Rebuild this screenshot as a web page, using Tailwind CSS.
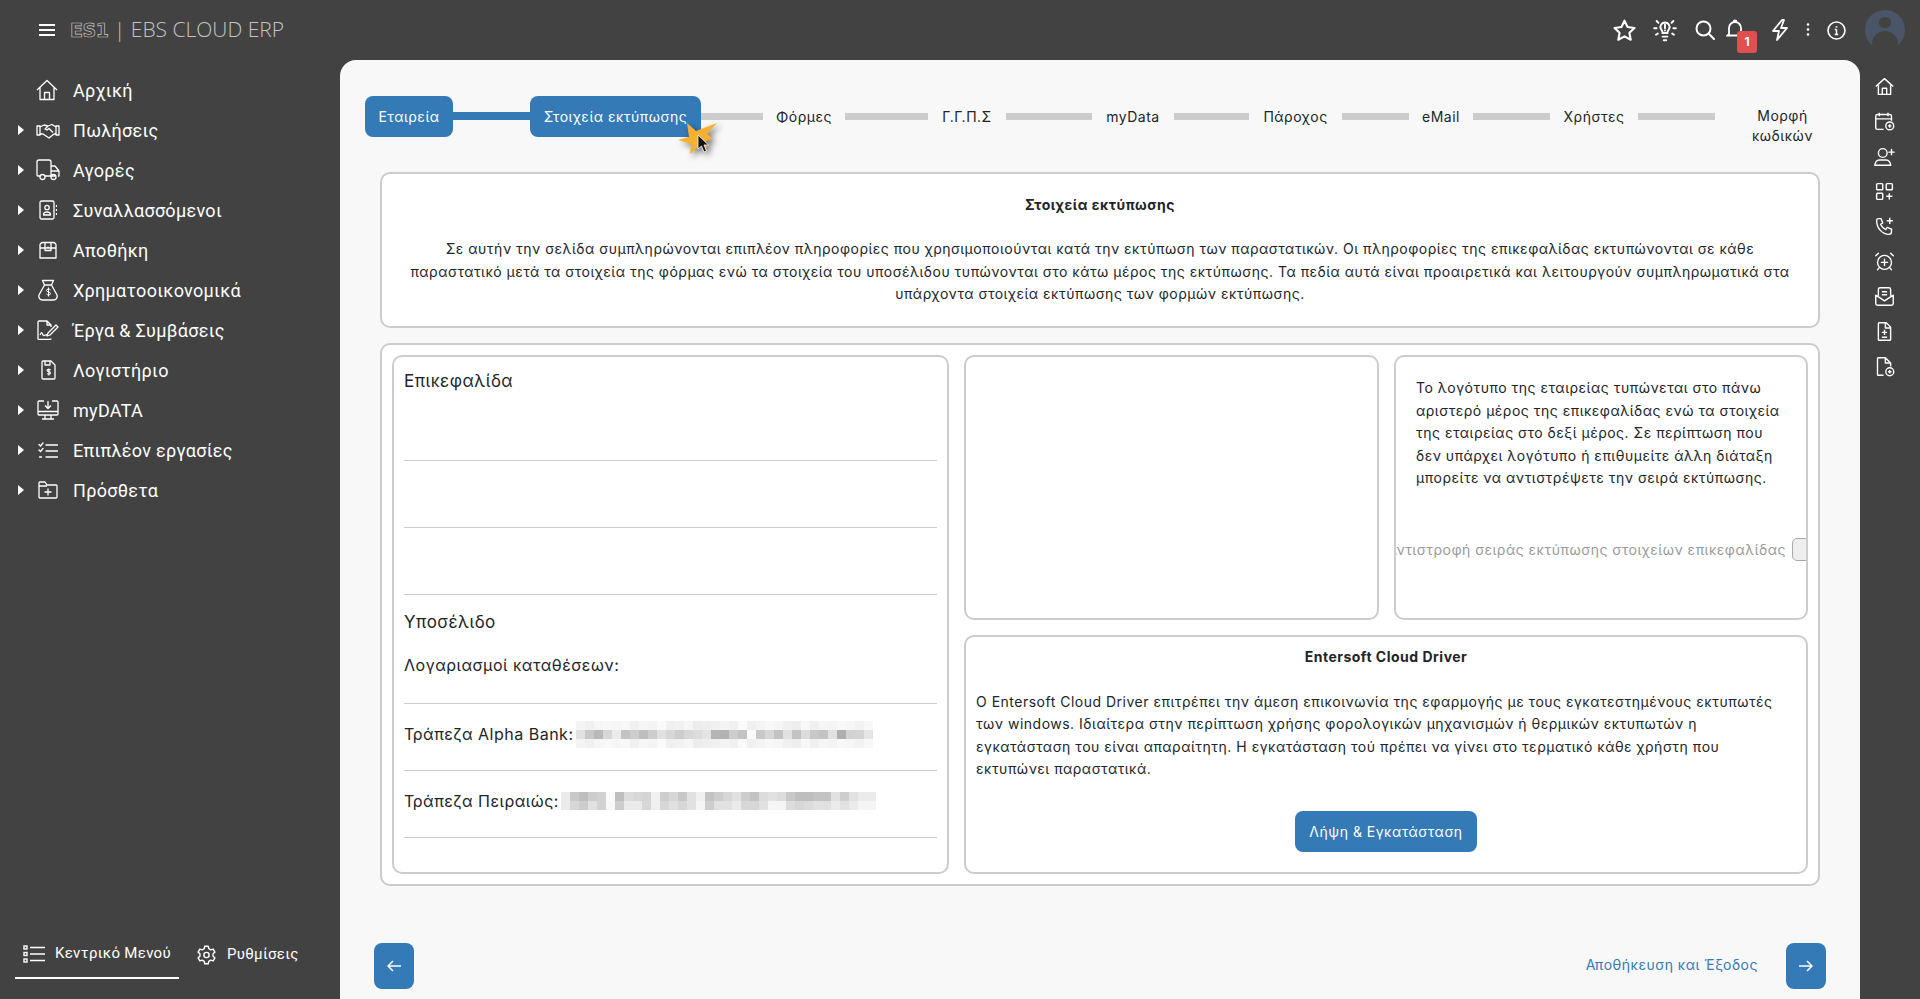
<!DOCTYPE html>
<html lang="el">
<head>
  <meta charset="UTF-8" />
  <title>EBS Cloud ERP</title>
  <script src="https://cdn.jsdelivr.net/npm/@tailwindcss/browser@4"></script>
</head>
<body class="h-screen overflow-hidden bg-[#424242] font-['Inter',sans-serif] text-[#212529] flex flex-col">
  <!-- Top bar -->
  <header class="h-[60px] shrink-0 flex items-center text-white">
    <svg class="ml-[39px] w-[17px] h-[14px]" viewBox="0 0 17 14" fill="none" stroke="#fff" stroke-width="2"><path d="M0 2h16M0 7h16M0 12h16"/></svg>
    <span class="ml-[14px] w-[42px] font-['DejaVu_Sans',sans-serif] font-bold text-[19px] leading-none tracking-[-0.5px] text-transparent [-webkit-text-stroke:0.7px_#c4c4c4]">ES1</span>
    <span class="ml-[2px] font-['Open_Sans',sans-serif] font-light text-[21px] text-[#c4c4c4] whitespace-nowrap">| EBS CLOUD ERP</span>
    <div class="ml-auto flex items-center h-full">
      <svg class="w-[25px] h-[25px]" viewBox="0 0 24 24" fill="none" stroke="#fff" stroke-width="2" stroke-linejoin="round"><path d="M12 2.500l2.900 6.200 6.700.9-4.900 4.600 1.300 6.700-6-3.300-6 3.300 1.300-6.700-4.900-4.600 6.700-.9z"/></svg>
      <svg class="ml-[16px] w-[24px] h-[24px]" viewBox="2 3 20 19" fill="none" stroke="#fff" stroke-width="1.600" stroke-linecap="round"><path d="M8.500 11.500a3.800 3.800 0 1 1 7 0c-.6 1-1.500 1.700-1.500 3.500h-4c0-1.800-.9-2.500-1.500-3.500zM10 18h4M11 21h2M12 8v3M12 12.800v.2M3 11h2M19 11h2M5 5l1.500 1.500M19 5l-1.500 1.500M4.500 16.500L6 15.500M19.500 16.500L18 15.500"/></svg>
      <svg class="ml-[17px] w-[22px] h-[22px]" viewBox="0 0 22 22" fill="none" stroke="#fff" stroke-width="2" stroke-linecap="round"><circle cx="9.500" cy="9.500" r="7"/><path d="M14.800 14.800L20 20"/></svg>
      <span class="relative ml-[10px] w-[18px] h-[22px]">
        <svg class="w-[18px] h-[22px]" viewBox="0 0 18 22" fill="none" stroke="#fff" stroke-width="1.800" stroke-linecap="round"><path d="M3 15V9a6 6 0 0 1 12 0v6l1.500 1.500h-15zM7.500 3a1.500 1.500 0 0 1 3 0"/></svg>
        <span class="absolute left-[11px] top-[12px] w-[20px] h-[22px] rounded-[3px] bg-[#df5050] text-white text-[12px] font-bold flex items-center justify-center">1</span>
      </span>
      <svg class="ml-[26px] w-[20px] h-[24px]" viewBox="0 0 20 24" fill="none" stroke="#fff" stroke-width="1.800" stroke-linejoin="round"><path d="M12 2L3 13h6l-2 9 10-12h-6l3-8z"/></svg>
      <svg class="ml-[16px] mb-[2px] w-[4px] h-[13px]" viewBox="0 0 4 13" fill="#fff"><circle cx="2" cy="1.500" r="1.300"/><circle cx="2" cy="6.500" r="1.300"/><circle cx="2" cy="11.500" r="1.300"/></svg>
      <svg class="ml-[17px] w-[19px] h-[19px]" viewBox="0 0 19 19" fill="none" stroke="#fff" stroke-width="1.600"><circle cx="9.500" cy="9.500" r="8.500"/><path d="M9.500 8.500v5M7.800 8.500h1.700M7.800 13.500h3.400"/><path d="M9.500 5.200v1.400" stroke-width="1.800"/></svg>
      <div class="ml-[19px] mr-[15px] w-[40px] h-[40px] rounded-full bg-[#4a5568] overflow-hidden flex flex-col items-center">
        <span class="mt-[7px] w-[12px] h-[12px] rounded-full bg-[#424242]"></span>
        <span class="mt-[3px] w-[26px] h-[20px] rounded-t-full bg-[#424242]"></span>
      </div>
    </div>
  </header>

  <div class="flex-1 flex min-h-0">
    <!-- Sidebar -->
    <aside class="w-[340px] shrink-0 flex flex-col text-white font-['Roboto',sans-serif]">
      <nav class="pt-[10px] text-[18px] tracking-[0.3px]">
        <a class="h-[40px] flex items-center"><span class="w-[36px]"></span>
          <svg class="w-[22px] h-[22px] mr-[15px]" viewBox="0 0 22 22" fill="none" stroke="#fff" stroke-width="1.300" stroke-linejoin="round"><path d="M1 11L11 1.500 21 11M4 8.500V20.500h14V8.500M8.500 20.500v-7h5v7"/></svg>Αρχική</a>
        <a class="h-[40px] flex items-center"><span class="w-[36px] pl-[18px]"><span class="block w-0 h-0 border-y-[5px] border-y-transparent border-l-[6px] border-l-white"></span></span>
          <svg class="w-[24px] h-[22px] mr-[13px]" viewBox="0 0 24 22" fill="none" stroke="#fff" stroke-width="1.300" stroke-linejoin="round"><path d="M1 7h3v9H1zM23 7h-3v9h3zM4 8l4-2 4 1 4-1.500 4 2.500v7h-2l-5 4-3-2-3-2H4zM12 7l-3 3 2 1 2-1.500 4 4"/></svg>Πωλήσεις</a>
        <a class="h-[40px] flex items-center"><span class="w-[36px] pl-[18px]"><span class="block w-0 h-0 border-y-[5px] border-y-transparent border-l-[6px] border-l-white"></span></span>
          <svg class="w-[24px] h-[22px] mr-[13px]" viewBox="0 0 24 22" fill="none" stroke="#fff" stroke-width="1.300" stroke-linejoin="round"><path d="M4 17H2a1 1 0 0 1-1-1V3a2 2 0 0 1 2-2h10a2 2 0 0 1 2 2v14H9M15 7h4l4 5v5h-1M15 12h8M19 17h-4"/><circle cx="6.500" cy="18" r="2.500"/><circle cx="17.500" cy="18" r="2.500"/></svg>Αγορές</a>
        <a class="h-[40px] flex items-center"><span class="w-[39px] pl-[18px]"><span class="block w-0 h-0 border-y-[5px] border-y-transparent border-l-[6px] border-l-white"></span></span>
          <svg class="w-[18px] h-[20px] mr-[16px]" viewBox="0 0 18 20" fill="none" stroke="#fff" stroke-width="1.300" stroke-linejoin="round"><rect x="1" y="1" width="14" height="18" rx="1.500"/><circle cx="8" cy="7.500" r="2.200"/><path d="M4.500 15c0-4 7-4 7 0zM17.500 5v2M17.500 9v2M17.500 13v2"/></svg>Συναλλασσόμενοι</a>
        <a class="h-[40px] flex items-center"><span class="w-[39px] pl-[18px]"><span class="block w-0 h-0 border-y-[5px] border-y-transparent border-l-[6px] border-l-white"></span></span>
          <svg class="w-[18px] h-[18px] mr-[16px]" viewBox="0 0 18 18" fill="none" stroke="#fff" stroke-width="1.300" stroke-linejoin="round"><path d="M1 5a3 3 0 0 1 3-3.500h10A3 3 0 0 1 17 5v12H1zM1 7h16M6 1.500V9.500h6V1.500M8 6.500h2"/></svg>Αποθήκη</a>
        <a class="h-[40px] flex items-center"><span class="w-[38px] pl-[18px]"><span class="block w-0 h-0 border-y-[5px] border-y-transparent border-l-[6px] border-l-white"></span></span>
          <svg class="w-[20px] h-[22px] mr-[15px]" viewBox="0 0 20 22" fill="none" stroke="#fff" stroke-width="1.300" stroke-linejoin="round"><path d="M6.500 6L4.500 1.500h11L13.500 6zM6.500 6h7l5.500 10c.7 3-1 5-3.500 5h-11C2 21 .3 19 1 16z"/><path d="M12.500 11c-1-1.500-4-1.200-4 .5s4 1.200 4 3-3 2-4 .5M10.500 8.500v9" stroke-width="1"/></svg>Χρηματοοικονομικά</a>
        <a class="h-[40px] flex items-center"><span class="w-[37px] pl-[18px]"><span class="block w-0 h-0 border-y-[5px] border-y-transparent border-l-[6px] border-l-white"></span></span>
          <svg class="w-[22px] h-[20px] mr-[14px]" viewBox="0 0 22 20" fill="none" stroke="#fff" stroke-width="1.300" stroke-linejoin="round"><path d="M14 18.500a1 1 0 0 1-1 1H2a1 1 0 0 1-1-1V2a1 1 0 0 1 1-1h8l4 4v2M10 1v4h4M3 15c2-4 2-2 3 0s2-1 3 0l2 0M11 13l8-8 2 2-8 8-3 1z"/></svg>Έργα &amp; Συμβάσεις</a>
        <a class="h-[40px] flex items-center"><span class="w-[40px] pl-[18px]"><span class="block w-0 h-0 border-y-[5px] border-y-transparent border-l-[6px] border-l-white"></span></span>
          <svg class="w-[16px] h-[20px] mr-[17px]" viewBox="0 0 16 20" fill="none" stroke="#fff" stroke-width="1.300" stroke-linejoin="round"><path d="M3 1h8l4 4v13a1 1 0 0 1-1 1H3a1 1 0 0 1-1-1V2a1 1 0 0 1 1-1zM5 1v4h5V1"/><path d="M10.500 10c-1-1-3.500-.8-3.500.5s3.500 1 3.500 2.500-2.500 1.700-3.500.5M8.800 8.500v7" stroke-width="1.100"/></svg>Λογιστήριο</a>
        <a class="h-[40px] flex items-center"><span class="w-[37px] pl-[18px]"><span class="block w-0 h-0 border-y-[5px] border-y-transparent border-l-[6px] border-l-white"></span></span>
          <svg class="w-[22px] h-[20px] mr-[14px]" viewBox="0 0 22 20" fill="none" stroke="#fff" stroke-width="1.300" stroke-linejoin="round"><path d="M7 1H2a1 1 0 0 0-1 1v12a1 1 0 0 0 1 1h18a1 1 0 0 0 1-1V2a1 1 0 0 0-1-1h-5M1 11.500h20M8 15v4M14 15v4M5 19h12M11 1v7M8 5.500L11 8.500 14 5.500"/></svg>myDATA</a>
        <a class="h-[40px] flex items-center"><span class="w-[38px] pl-[18px]"><span class="block w-0 h-0 border-y-[5px] border-y-transparent border-l-[6px] border-l-white"></span></span>
          <svg class="w-[20px] h-[16px] mr-[15px]" viewBox="0 0 20 16" fill="none" stroke="#fff" stroke-width="1.300" stroke-linecap="round"><path d="M1 2.500l1.500 1.500L5 1M1 8l1.500 1.500L5 6.500M8 3h11.500M8 9h11.500M8 15h11.500M1.500 15h2"/></svg>Επιπλέον εργασίες</a>
        <a class="h-[40px] flex items-center"><span class="w-[38px] pl-[18px]"><span class="block w-0 h-0 border-y-[5px] border-y-transparent border-l-[6px] border-l-white"></span></span>
          <svg class="w-[20px] h-[18px] mr-[15px]" viewBox="0 0 20 18" fill="none" stroke="#fff" stroke-width="1.300" stroke-linejoin="round"><path d="M1 2a1 1 0 0 1 1-1h5l2 3h9a1 1 0 0 1 1 1v11a1 1 0 0 1-1 1H2a1 1 0 0 1-1-1zM1 5h8M10 7.500v7M6.500 11h7"/></svg>Πρόσθετα</a>
      </nav>
      <div class="mt-auto mb-[20px] ml-[15px] flex items-start text-[15px] tracking-[0.3px]">
        <div class="w-[164px] h-[42px] border-b-2 border-white flex items-center pl-[8px] pb-[7px] gap-[10px]">
          <svg class="w-[22px] h-[18px]" viewBox="0 0 22 18" fill="none" stroke="#fff" stroke-width="1.400"><rect x="1" y="1" width="3" height="3"/><rect x="1" y="7.500" width="3" height="3"/><rect x="1" y="14" width="3" height="3"/><path d="M7 2.500h15M7 9h15M7 15.500h15"/></svg>
          <span class="whitespace-nowrap">Κεντρικό Μενού</span>
        </div>
        <div class="h-[35px] flex items-center ml-[17px] gap-[10px]">
          <svg class="w-[21px] h-[22px]" viewBox="0 0 24 24" fill="none" stroke="#fff" stroke-width="1.600" stroke-linejoin="round"><path d="M10 2h4l.6 2.800 2.300 1.300 2.700-.9 2 3.500-2.100 1.900v2.800l2.100 1.900-2 3.500-2.700-.9-2.300 1.300L14 22h-4l-.6-2.800-2.300-1.300-2.700.9-2-3.500 2.100-1.900V10.600L2.400 8.700l2-3.500 2.700.9 2.300-1.300z"/><circle cx="12" cy="12" r="3"/></svg>
          <span>Ρυθμίσεις</span>
        </div>
      </div>
    </aside>

    <!-- Main panel -->
    <main class="flex-1 min-w-0 rounded-t-[16px] bg-[#f8f8f8] flex flex-col relative tracking-[0.5px]">
      <!-- Steps -->
      <div class="mt-[36px] ml-[25px] flex items-start text-[14px] text-[#212529] h-[76px]">
        <span class="w-[88px] h-[41px] rounded-[8px] bg-[#337ab7] text-white flex items-center justify-center">Εταιρεία</span>
        <span class="mt-[16px] w-[77px] h-[8px] bg-[#337ab7]"></span>
        <span class="w-[171px] h-[41px] rounded-[8px] bg-[#337ab7] text-white flex items-center justify-center whitespace-nowrap">Στοιχεία εκτύπωσης</span>
        <span class="mt-[17px] w-[62px] h-[7px] bg-[#cccccc]"></span>
        <span class="w-[82px] h-[41px] flex items-center justify-center">Φόρμες</span>
        <span class="mt-[17px] w-[83px] h-[7px] bg-[#cccccc]"></span>
        <span class="w-[78px] h-[41px] flex items-center justify-center">Γ.Γ.Π.Σ</span>
        <span class="mt-[17px] w-[86px] h-[7px] bg-[#cccccc]"></span>
        <span class="w-[82px] h-[41px] flex items-center justify-center">myData</span>
        <span class="mt-[17px] w-[75px] h-[7px] bg-[#cccccc]"></span>
        <span class="w-[93px] h-[41px] flex items-center justify-center">Πάροχος</span>
        <span class="mt-[17px] w-[67px] h-[7px] bg-[#cccccc]"></span>
        <span class="w-[64px] h-[41px] flex items-center justify-center">eMail</span>
        <span class="mt-[17px] w-[77px] h-[7px] bg-[#cccccc]"></span>
        <span class="w-[88px] h-[41px] flex items-center justify-center">Χρήστες</span>
        <span class="mt-[17px] w-[77px] h-[7px] bg-[#cccccc]"></span>
        <span class="w-[135px] mt-[10px] leading-[20px] text-center">Μορφή<br>κωδικών</span>
      </div>

      <!-- Click marker and pointer -->
      <svg class="absolute left-[336px] top-[62px] w-[48px] h-[36px] drop-shadow-[3px_3px_3px_rgba(0,0,0,0.5)]" viewBox="0 0 48 36">
        <path d="M2 18l11-3-2-14 9 8L41 1 31 12l6 5-7 2 1 7-8-2-9 8 1-10z" fill="#f5b031"/>
        <path d="M22 13v14l3.500-3 2.500 6 2.500-1-2.500-6 4.500 0z" fill="#111" stroke="#fff" stroke-width="0.800"/>
      </svg>

      <!-- Intro card -->
      <section class="mx-[40px] h-[156px] border-2 border-[#cccccc] rounded-[10px] bg-white text-center text-[14px] px-[20px]">
        <h2 class="mt-[20px] font-bold leading-[22px]">Στοιχεία εκτύπωσης</h2>
        <p class="mt-[22px] leading-[22.5px]">Σε αυτήν την σελίδα συμπληρώνονται επιπλέον πληροφορίες που χρησιμοποιούνται κατά την εκτύπωση των παραστατικών. Οι πληροφορίες της επικεφαλίδας εκτυπώνονται σε κάθε παραστατικό μετά τα στοιχεία της φόρμας ενώ τα στοιχεία του υποσέλιδου τυπώνονται στο κάτω μέρος της εκτύπωσης. Τα πεδία αυτά είναι προαιρετικά και λειτουργούν συμπληρωματικά στα υπάρχοντα στοιχεία εκτύπωσης των φορμών εκτύπωσης.</p>
      </section>

      <!-- Form card -->
      <section class="mt-[15px] mx-[40px] h-[543px] border-2 border-[#cccccc] rounded-[10px] bg-white p-[10px] flex gap-[15px]">
        <div class="w-[557px] shrink-0 border-2 border-[#cccccc] rounded-[10px] px-[10px] text-[16px]">
          <div class="h-[104px] border-b border-[#cccccc] pt-[12px] leading-[24px] text-[17px]">Επικεφαλίδα</div>
          <div class="h-[67px] border-b border-[#cccccc]"></div>
          <div class="h-[67px] border-b border-[#cccccc]"></div>
          <div class="mt-[15px] leading-[24px] text-[17px]">Υποσέλιδο</div>
          <div class="mt-[19px] h-[51px] leading-[24px] border-b border-[#cccccc]">Λογαριασμοί καταθέσεων:</div>
          <div class="h-[67px] pb-[6px] border-b border-[#cccccc] flex items-center gap-[2px] whitespace-nowrap">Τράπεζα Alpha Bank: <span id="blur-alpha" class="inline-grid grid-cols-[repeat(33,9px)] grid-rows-[repeat(3,9px)]"></span></div>
          <div class="h-[67px] pb-[6px] border-b border-[#cccccc] flex items-center gap-[2px] whitespace-nowrap">Τράπεζα Πειραιώς: <span id="blur-piraeus" class="inline-grid grid-cols-[repeat(35,9px)] grid-rows-[repeat(2,9px)]"></span></div>
        </div>
        <div class="flex-1 min-w-0 flex flex-col gap-[15px]">
          <div class="h-[265px] flex gap-[15px]">
            <div class="w-[415px] border-2 border-[#cccccc] rounded-[10px]"></div>
            <div class="flex-1 min-w-0 border-2 border-[#cccccc] rounded-[10px] overflow-hidden text-[14px]">
              <p class="mt-[20px] px-[20px] leading-[22.5px]">Το λογότυπο της εταιρείας τυπώνεται στο πάνω αριστερό μέρος της επικεφαλίδας ενώ τα στοιχεία της εταιρείας στο δεξί μέρος. Σε περίπτωση που δεν υπάρχει λογότυπο ή επιθυμείτε άλλη διάταξη μπορείτε να αντιστρέψετε την σειρά εκτύπωσης.</p>
              <div class="mt-[48px] flex justify-end items-center whitespace-nowrap text-[#9a9a9a]">
                <span>Αντιστροφή σειράς εκτύπωσης στοιχείων επικεφαλίδας</span>
                <span class="ml-[6px] -mr-[26px] shrink-0 w-[40px] h-[23px] rounded-[5px] border border-[#aaaaaa] bg-[#eeeeee]"></span>
              </div>
            </div>
          </div>
          <div class="h-[239px] border-2 border-[#cccccc] rounded-[10px] px-[10px] text-[14px]">
            <h3 class="mt-[9px] text-center font-bold leading-[22px]">Entersoft Cloud Driver</h3>
            <p class="mt-[23px] leading-[22.4px]">Ο Entersoft Cloud Driver επιτρέπει την άμεση επικοινωνία της εφαρμογής με τους εγκατεστημένους εκτυπωτές των windows. Ιδιαίτερα στην περίπτωση χρήσης φορολογικών μηχανισμών ή θερμικών εκτυπωτών η εγκατάσταση του είναι απαραίτητη. Η εγκατάσταση τού πρέπει να γίνει στο τερματικό κάθε χρήστη που εκτυπώνει παραστατικά.</p>
            <div class="mt-[30px] flex justify-center">
              <span class="w-[182px] h-[41px] rounded-[8px] bg-[#337ab7] text-white flex items-center justify-center">Λήψη &amp; Εγκατάσταση</span>
            </div>
          </div>
        </div>
      </section>

      <!-- Footer navigation -->
      <div class="mt-auto mb-[10px] mx-[34px] flex items-center text-[14px]">
        <span class="w-[40px] h-[46px] rounded-[8px] bg-[#337ab7] flex items-center justify-center">
          <svg class="w-[14px] h-[12px]" viewBox="0 0 14 12" fill="none" stroke="#fff" stroke-width="1.500"><path d="M14 6H1M6 1L1 6l5 5"/></svg>
        </span>
        <span class="ml-auto mb-[4px] text-[#337ab7] whitespace-nowrap">Αποθήκευση και Έξοδος</span>
        <span class="ml-[28px] w-[40px] h-[46px] rounded-[8px] bg-[#337ab7] flex items-center justify-center">
          <svg class="w-[14px] h-[12px]" viewBox="0 0 14 12" fill="none" stroke="#fff" stroke-width="1.500"><path d="M0 6h13M8 1l5 5-5 5"/></svg>
        </span>
      </div>
    </main>

    <!-- Quick actions -->
    <aside class="w-[60px] shrink-0 pt-[16px] pr-[12px] flex flex-col items-center gap-[14px]">
      <svg class="w-[21px] h-[21px]" viewBox="0 0 24 24" fill="none" stroke="#fff" stroke-width="1.600" stroke-linejoin="round"><path d="M2 12L12 3l10 9M5 10v11h14V10M9.500 21v-7h5v7"/></svg>
      <svg class="w-[21px] h-[21px]" viewBox="0 0 24 24" fill="none" stroke="#fff" stroke-width="1.600" stroke-linejoin="round"><path d="M11 21H4a2 2 0 0 1-2-2V6a2 2 0 0 1 2-2h14a2 2 0 0 1 2 2v5M2 9h18M6 2v4M16 2v4"/><circle cx="18" cy="17" r="4.500"/><path d="M18 15v4M16 17h4"/></svg>
      <svg class="w-[21px] h-[21px]" viewBox="0 0 24 24" fill="none" stroke="#fff" stroke-width="1.600" stroke-linecap="round"><circle cx="10" cy="8" r="5"/><path d="M1 22c0-3 2-6 5-6h8c3 0 5 3 5 6zM20 4v6M17 7h6"/></svg>
      <svg class="w-[21px] h-[21px]" viewBox="0 0 24 24" fill="none" stroke="#fff" stroke-width="1.600"><rect x="3" y="3" width="7" height="7" rx="1"/><rect x="14" y="3" width="7" height="7" rx="1"/><rect x="3" y="14" width="7" height="7" rx="1"/><path d="M14 17.500h7M17.500 14v7"/></svg>
      <svg class="w-[21px] h-[21px]" viewBox="0 0 24 24" fill="none" stroke="#fff" stroke-width="1.600" stroke-linejoin="round"><path d="M5 3h3l2 5-2.500 1.500a11 11 0 0 0 6 6L15 13l5 2v3a3 3 0 0 1-3 3C9.800 21 3 14.200 3 5a2 2 0 0 1 2-2zM18 2v7M14.500 5.500h7"/></svg>
      <svg class="w-[21px] h-[21px]" viewBox="0 0 24 24" fill="none" stroke="#fff" stroke-width="1.600" stroke-linecap="round"><circle cx="12" cy="13" r="8"/><path d="M12 9.500v7M8.500 13h7M5 2.500L2 5.500M19 2.500l3 3M6 19l-2 2.500M18 19l2 2.500"/></svg>
      <svg class="w-[21px] h-[21px]" viewBox="0 0 24 24" fill="none" stroke="#fff" stroke-width="1.600" stroke-linejoin="round"><path d="M5 11V4a2 2 0 0 1 2-2h10a2 2 0 0 1 2 2v7M2 10.500V20a2 2 0 0 0 2 2h16a2 2 0 0 0 2-2v-9.500L12 17zM9 6.500h6M9 10h6"/></svg>
      <svg class="w-[21px] h-[21px]" viewBox="0 0 24 24" fill="none" stroke="#fff" stroke-width="1.600" stroke-linejoin="round"><path d="M6 2h8l5 5v14a1 1 0 0 1-1 1H6a1 1 0 0 1-1-1V3a1 1 0 0 1 1-1zM13 2v6h6M12 10v6M9 13h6M9 18.500h6"/></svg>
      <svg class="w-[21px] h-[21px]" viewBox="0 0 24 24" fill="none" stroke="#fff" stroke-width="1.600" stroke-linejoin="round"><path d="M11 22H5a1 1 0 0 1-1-1V3a1 1 0 0 1 1-1h8l6 6v4M13 2v6h6"/><circle cx="18" cy="18" r="4.500"/><path d="M18 16v4M16 18h4"/></svg>
    </aside>
  </div>

  <script>
    // Redacted account numbers: rows of grey levels, one cell each
    function pixelate(id, rows) {
      const box = document.getElementById(id);
      rows.forEach(row => row.forEach(v => {
        const cell = document.createElement('span');
        cell.style.background = 'rgb(' + v + ',' + v + ',' + v + ')';
        box.appendChild(cell);
      }));
    }
    const light = [244,240,246,248,246,248,240,246,244,250,240,242,246,236,238,240,244,240,250,240,244,248,246,240,238,248,240,246,244,248,246,242,248];
    const mid = [225,200,185,215,235,195,205,190,205,225,215,205,215,220,228,180,178,205,195,250,200,215,195,225,195,220,200,195,225,175,210,212,230];
    pixelate('blur-alpha', [light, mid, light]);
    const top2 = [235,200,190,205,210,250,190,220,215,212,240,205,215,200,225,240,195,205,215,225,205,195,220,225,220,200,190,190,195,195,225,205,225,235,235];
    const bot2 = [235,215,205,225,210,248,205,235,235,215,240,215,225,215,225,245,205,225,225,235,215,215,225,245,245,220,215,220,225,225,235,225,235,245,245];
    pixelate('blur-piraeus', [top2, bot2]);
  </script>
</body>
</html>
